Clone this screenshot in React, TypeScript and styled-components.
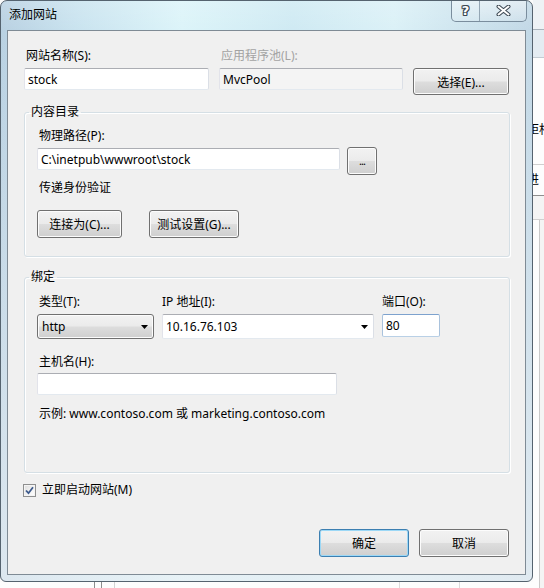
import styled, { createGlobalStyle } from 'styled-components';

const GlobalStyle = createGlobalStyle`
  html, body {
    margin: 0;
    padding: 0;
  }
  body {
    font-family: "Noto Sans", "Noto Sans CJK SC", sans-serif;
    font-size: 12px;
    color: #000;
  }
`;

const Desktop = styled.div`
  display: flex;
  width: 544px;
  height: 588px;
  overflow: hidden;
  background: #fafafa;
`;

const DialogColumn = styled.div`
  display: flex;
  flex-direction: column;
  width: 533px;
  flex-shrink: 0;
`;

const Window = styled.div`
  box-sizing: border-box;
  width: 533px;
  height: 582px;
  display: flex;
  flex-direction: column;
  border: 1px solid #55636f;
  border-radius: 7px 7px 6px 6px;
  overflow: hidden;
  background:
    linear-gradient(180deg, rgba(255, 255, 255, 0.15) 0, rgba(255, 255, 255, 0) 30px, rgba(236, 241, 245, 0.7) 100%),
    linear-gradient(90deg, #b9d1e2 0%, #c9e3ef 14%, #dcf4f9 34%, #cfeaf3 55%, #dbf1f7 74%, #c2d8e6 100%);
`;

const TitleBar = styled.div`
  height: 29px;
  flex-shrink: 0;
  display: flex;
  align-items: flex-start;
  justify-content: space-between;
`;

const Title = styled.span`
  margin: 6px 0 0 8px;
  line-height: 16px;
`;

const CaptionGroup = styled.div`
  display: flex;
  height: 21px;
  margin: -1px 5px 0 0;
  border: 1px solid #7a8d9d;
  border-top: 0;
  border-radius: 0 0 5px 5px;
  overflow: hidden;
  background: linear-gradient(180deg, rgba(255, 255, 255, 0.45), rgba(255, 255, 255, 0.15));
`;

const CaptionButton = styled.div<{ $w: number }>`
  width: ${(p) => p.$w}px;
  display: flex;
  align-items: center;
  justify-content: center;
  & + & {
    border-left: 1px solid #94a6b4;
  }
`;

const HelpGlyph = styled.span`
  font-family: "DejaVu Sans", sans-serif;
  font-size: 13px;
  font-weight: bold;
  line-height: 14px;
  color: #fff;
  text-shadow:
    1px 0 0 #3e4954, -1px 0 0 #3e4954, 0 1px 0 #3e4954, 0 -1px 0 #3e4954,
    1px 1px 0 #3e4954, -1px -1px 0 #3e4954, 1px -1px 0 #3e4954, -1px 1px 0 #3e4954;
`;

const FrameBody = styled.div`
  flex: 1;
  display: flex;
  padding: 0 6px 6px 6px;
`;

const Client = styled.div`
  flex: 1;
  display: flex;
  flex-direction: column;
  border: 1px solid #7f8b95;
  background: #f0f0f0;
  padding: 17px 15px 17px 16px;
`;

const TopRow = styled.div`
  display: grid;
  grid-template-columns: 185px 184px 96px;
  column-gap: 10px;
  row-gap: 4px;
  align-items: start;
`;

const Label = styled.div<{ $disabled?: boolean; $indent?: number }>`
  line-height: 16px;
  white-space: nowrap;
  padding-left: ${(p) => p.$indent ?? 2}px;
  color: ${(p) => (p.$disabled ? '#a3a3a3' : '#000')};
`;

const TextBox = styled.input<{ $w?: number; $h?: number; $readonly?: boolean }>`
  box-sizing: border-box;
  width: ${(p) => (p.$w ? `${p.$w}px` : '100%')};
  height: ${(p) => p.$h ?? 22}px;
  margin: 0;
  padding: 0 3px;
  font: inherit;
  color: #000;
  border: 1px solid;
  border-color: #abadb3 #dbdfe6 #e3e9ef #e2e3ea;
  border-radius: 2px;
  background: ${(p) => (p.$readonly ? '#f4f4f4' : '#fff')};
  outline: none;
`;

const PortBox = styled(TextBox)`
  border-color: #7da2ce #a9c2dc #b9d0e6 #a9c2dc;
`;

const Button = styled.div<{ $w: number; $h?: number; $default?: boolean }>`
  box-sizing: border-box;
  width: ${(p) => p.$w}px;
  height: ${(p) => p.$h ?? 28}px;
  display: flex;
  align-items: center;
  justify-content: center;
  white-space: nowrap;
  border: 1px solid ${(p) => (p.$default ? '#3c7fb1' : '#707070')};
  border-radius: 3px;
  background: linear-gradient(180deg, #f2f2f2 0%, #ebebeb 48%, #dddddd 52%, #cfcfcf 100%);
  box-shadow: inset 0 0 0 1px ${(p) => (p.$default ? '#9cd8f6' : '#fcfcfc')};
`;

const DotsLabel = styled.span`
  font-size: 11px;
  line-height: 10px;
  letter-spacing: -1px;
`;

const GroupBox = styled.fieldset<{ $gap: number }>`
  margin: ${(p) => p.$gap}px 0 0 0;
  padding: 0;
  min-width: 0;
  border: 1px solid #d5dfe5;
  border-radius: 3px;
  box-shadow: inset 1px 1px 0 #fff, 1px 1px 0 #fff;
`;

const Legend = styled.legend`
  margin-left: 4px;
  padding: 0 2px;
  line-height: 16px;
`;

const GroupBody = styled.div<{ $top: number; $bottom: number }>`
  display: flex;
  flex-direction: column;
  align-items: flex-start;
  padding: ${(p) => p.$top}px 13px ${(p) => p.$bottom}px 12px;
`;

const PathRow = styled.div`
  display: flex;
  align-items: flex-start;
  gap: 7px;
  margin-top: 3px;
  & > input {
    margin-top: 1px;
  }
`;

const Spaced = styled.div<{ $top: number }>`
  margin-top: ${(p) => p.$top}px;
`;

const ButtonRow = styled.div<{ $gap: number }>`
  display: flex;
  gap: ${(p) => p.$gap}px;
`;

const BindingGrid = styled.div`
  display: grid;
  grid-template-columns: 117px 212px 58px;
  column-gap: 8px;
  row-gap: 4px;
  align-items: start;
`;

const DropDown = styled(Button)`
  justify-content: space-between;
  padding: 0 5px 0 4px;
  border-radius: 3px;
`;

const ComboBox = styled.div`
  box-sizing: border-box;
  height: 25px;
  display: flex;
  align-items: center;
  justify-content: space-between;
  padding: 0 5px 0 3px;
  border: 1px solid;
  border-color: #abadb3 #dbdfe6 #e3e9ef #e2e3ea;
  border-radius: 2px;
  background: #fff;
`;

const CheckRow = styled.div`
  display: flex;
  align-items: center;
  gap: 6px;
  margin: 9px 0 0 -1px;
  line-height: 16px;
`;

const CheckBox = styled.div`
  box-sizing: border-box;
  width: 13px;
  height: 13px;
  display: flex;
  align-items: center;
  justify-content: center;
  border: 1px solid #8e8f8f;
  background: linear-gradient(135deg, #dcdcdc 0%, #f4f4f4 60%, #ffffff 100%);
  box-shadow: inset 0 0 0 1px #f4f4f4;
`;

const Footer = styled.div`
  display: flex;
  justify-content: flex-end;
  gap: 10px;
  margin: auto 1px 0 0;
`;

const BottomPeek = styled.div`
  height: 6px;
  background:
    linear-gradient(#8d8d8d, #8d8d8d) 94px 0 / 1px 100% no-repeat,
    linear-gradient(#8d8d8d, #8d8d8d) 101px 0 / 1px 100% no-repeat,
    linear-gradient(#d4d4d4, #d4d4d4) 114px 0 / 1px 100% no-repeat,
    linear-gradient(#dcdcdc, #dcdcdc) 399px 0 / 1px 100% no-repeat,
    linear-gradient(#dcdcdc, #dcdcdc) 459px 0 / 1px 100% no-repeat,
    #fdfdfd;
`;

/* the neighbouring window that shows at the right edge */
const SideStrip = styled.div`
  flex: 1;
  display: flex;
  flex-direction: column;
  overflow: hidden;
  background: #fdfdfd;
`;

const StripBand = styled.div<{ $h: number; $bg?: string; $line?: string }>`
  height: ${(p) => p.$h}px;
  flex-shrink: 0;
  background: ${(p) => p.$bg ?? 'transparent'};
  border-bottom: ${(p) => (p.$line ? `1px solid ${p.$line}` : '0')};
`;

const StripText = styled.div<{ $h: number }>`
  height: ${(p) => p.$h}px;
  flex-shrink: 0;
  margin-left: -6px;
  display: flex;
  align-items: center;
  white-space: nowrap;
  line-height: 16px;
`;

const StripColumns = styled.div`
  flex: 1;
  margin-left: 6px;
  border-left: 1px solid #c9c9c9;
  background: #f4f4f4;
`;

const Arrow = () => (
  <svg width="7" height="4" viewBox="0 0 7 4">
    <path d="M0 0h7L3.5 4z" fill="#000" />
  </svg>
);

const CloseGlyph = () => (
  <svg width="15" height="11" viewBox="0 0 15 11">
    <path d="M2.5 1.5 L12.5 9.5 M12.5 1.5 L2.5 9.5" stroke="#3e4954" strokeWidth="4" strokeLinecap="round" fill="none" />
    <path d="M2.5 1.5 L12.5 9.5 M12.5 1.5 L2.5 9.5" stroke="#fff" strokeWidth="2" strokeLinecap="round" fill="none" />
  </svg>
);

const CheckMark = () => (
  <svg width="9" height="9" viewBox="0 0 9 9">
    <path d="M1 4.5 L3.5 7.2 L8 1.3" stroke="#3d5a8c" strokeWidth="1.8" fill="none" />
  </svg>
);

export default function App() {
  return (
    <>
      <GlobalStyle />
      <Desktop>
        <DialogColumn>
          <Window>
            <TitleBar>
              <Title>添加网站</Title>
              <CaptionGroup>
                <CaptionButton $w={27}>
                  <HelpGlyph>?</HelpGlyph>
                </CaptionButton>
                <CaptionButton $w={46}>
                  <CloseGlyph />
                </CaptionButton>
              </CaptionGroup>
            </TitleBar>
            <FrameBody>
              <Client>
                <TopRow>
                  <Label>网站名称(S):</Label>
                  <Label $disabled>应用程序池(L):</Label>
                  <div />
                  <TextBox defaultValue="stock" />
                  <TextBox defaultValue="MvcPool" readOnly $readonly />
                  <Button $w={96} $h={27}>选择(E)...</Button>
                </TopRow>

                <GroupBox $gap={9}>
                  <Legend>内容目录</Legend>
                  <GroupBody $top={8} $bottom={18}>
                    <Label>物理路径(P):</Label>
                    <PathRow>
                      <TextBox $w={303} defaultValue="C:\inetpub\wwwroot\stock" />
                      <Button $w={30}>
                        <DotsLabel>...</DotsLabel>
                      </Button>
                    </PathRow>
                    <Spaced $top={5}>
                      <Label>传递身份验证</Label>
                    </Spaced>
                    <Spaced $top={14}>
                      <ButtonRow $gap={27}>
                        <Button $w={85}>连接为(C)...</Button>
                        <Button $w={90}>测试设置(G)...</Button>
                      </ButtonRow>
                    </Spaced>
                  </GroupBody>
                </GroupBox>

                <GroupBox $gap={12}>
                  <Legend>绑定</Legend>
                  <GroupBody $top={9} $bottom={50}>
                    <BindingGrid>
                      <Label>类型(T):</Label>
                      <Label $indent={0}>IP 地址(I):</Label>
                      <Label $indent={0}>端口(O):</Label>
                      <DropDown $w={117} $h={25}>
                        <span>http</span>
                        <Arrow />
                      </DropDown>
                      <ComboBox>
                        <span>10.16.76.103</span>
                        <Arrow />
                      </ComboBox>
                      <PortBox $h={23} defaultValue="80" />
                    </BindingGrid>
                    <Spaced $top={15}>
                      <Label>主机名(H):</Label>
                    </Spaced>
                    <Spaced $top={3}>
                      <TextBox $w={300} />
                    </Spaced>
                    <Spaced $top={11}>
                      <Label>示例: www.contoso.com 或 marketing.contoso.com</Label>
                    </Spaced>
                  </GroupBody>
                </GroupBox>

                <CheckRow>
                  <CheckBox>
                    <CheckMark />
                  </CheckBox>
                  <span>立即启动网站(M)</span>
                </CheckRow>

                <Footer>
                  <Button $w={90} $default>确定</Button>
                  <Button $w={90}>取消</Button>
                </Footer>
              </Client>
            </FrameBody>
          </Window>
          <BottomPeek />
        </DialogColumn>

        <SideStrip>
          <StripBand $h={29} $bg="#eef2f5" $line="#a9b3bb" />
          <StripBand $h={27} $bg="#e4ecf2" $line="#c3ccd3" />
          <StripBand $h={63} />
          <StripText $h={18}>距相</StripText>
          <StripBand $h={25} $line="#cfcfcf" />
          <StripText $h={29}>进</StripText>
          <StripBand $h={1} $line="#8e8e8e" />
          <StripBand $h={23} $bg="#f4f4f4" $line="#d0d0d0" />
          <StripColumns />
        </SideStrip>
      </Desktop>
    </>
  );
}
